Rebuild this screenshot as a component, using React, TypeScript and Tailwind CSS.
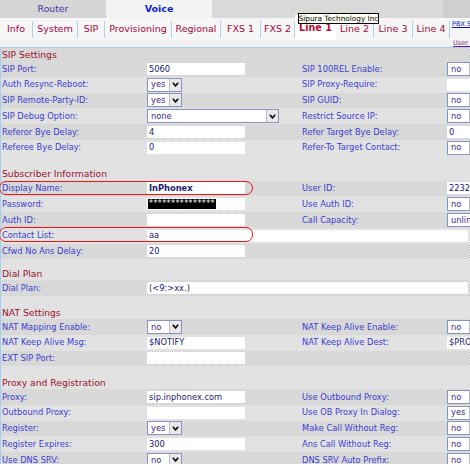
import React from "react";

const DOT =
  "bg-[#d9d9d9] bg-[image:repeating-conic-gradient(#d0d0d0_0%_25%,#e1e1e1_0%_50%)] bg-[length:2px_2px]";
const PLAIN = "bg-[#e2e2e2]";
const LABEL = "text-[8.3px] leading-none whitespace-nowrap text-[#3c3cd2]";

function Chevron() {
  return (
    <svg width="7" height="5" viewBox="0 0 7 5">
      <polyline points="0.8,0.8 3.5,3.9 6.2,0.8" fill="none" stroke="#111" strokeWidth="1.7" />
    </svg>
  );
}

function Sel({ v, wc = "w-[35px]" }: { v: string; wc?: string }) {
  return (
    <div className={`flex h-[14px] shrink-0 border border-[#8a93bd] bg-white ${wc}`}>
      <div className="flex flex-1 items-center pl-[3px] text-[8.3px] leading-none whitespace-nowrap text-[#3a1f8e]">{v}</div>
      <div className="flex w-[12px] items-center justify-center border-l border-[#b8bccc] bg-[#e9e9ec]">
        <Chevron />
      </div>
    </div>
  );
}

function Inp({ v = "", wc = "w-[98px]", bold = false }: { v?: string; wc?: string; bold?: boolean }) {
  return (
    <div
      className={`flex h-[12px] shrink-0 items-center bg-white pl-[2px] text-[8.3px] leading-none whitespace-nowrap text-[#202070] ${wc} ${
        bold ? "font-bold" : ""
      }`}
    >
      {v}
    </div>
  );
}

function Row({
  dotted,
  label,
  left,
  rlabel,
  right,
  wide,
  oval,
}: {
  dotted?: boolean;
  label: string;
  left?: React.ReactNode;
  rlabel?: string;
  right?: React.ReactNode;
  wide?: boolean;
  oval?: string;
}) {
  return (
    <div className={`relative flex h-[15.75px] items-center ${dotted ? DOT : PLAIN}`}>
      <div className={`w-[146px] shrink-0 pl-[1px] ${LABEL}`}>{label}</div>
      {wide ? (
        <div className="flex flex-1">{left}</div>
      ) : (
        <>
          <div className="flex w-[155px] shrink-0">{left}</div>
          <div className={`w-[145px] shrink-0 ${LABEL}`}>{rlabel}</div>
          <div className="flex flex-1 overflow-hidden">{right}</div>
        </>
      )}
      {oval && <div className={`pointer-events-none absolute left-[-2px] w-[254px] rounded-[7px] border-[1.5px] border-[#ee1515] ${oval}`} />}
    </div>
  );
}

function Header({ t, dotted }: { t: string; dotted?: boolean }) {
  return (
    <div className={`flex h-[13px] items-center pl-[1px] text-[9.2px] leading-none text-[#9a0f2c] ${dotted ? DOT : PLAIN}`}>{t}</div>
  );
}

function Tab({ t, wc }: { t: string; wc: string }) {
  return (
    <div className={`flex h-full shrink-0 items-center justify-center text-[9.5px] leading-none whitespace-nowrap text-[#a8063c] ${wc}`}>{t}</div>
  );
}

function Sep() {
  return <div className="h-[17px] w-px shrink-0 bg-[#a9d3f2]" />;
}

export default function App() {
  return (
    <div className="relative h-[464px] w-[470px] overflow-hidden bg-[#e2e2e2] font-['DejaVu_Sans',sans-serif]">
      {/* top tabs */}
      <div className="flex h-[18px]">
        <div className="flex w-[106px] items-center justify-center bg-[#d6d6d6] text-[9.3px] leading-none text-[#4630a6]">Router</div>
        <div className="flex w-[106px] items-center justify-center bg-[#f3f3f3] text-[9.5px] font-bold leading-none text-[#0a1fe6]">Voice</div>
        <div className="w-[231px] bg-[#d9d9d9]" />
        <div className="flex-1 bg-[#cfcfcf]" />
      </div>
      {/* sub tabs */}
      <div className="flex h-[22px] items-center bg-[#f6f6f6]">
        <Tab t="Info" wc="w-[32px]" />
        <Sep />
        <Tab t="System" wc="w-[44px]" />
        <Sep />
        <Tab t="SIP" wc="w-[26px]" />
        <Sep />
        <Tab t="Provisioning" wc="w-[66px]" />
        <Sep />
        <Tab t="Regional" wc="w-[48px]" />
        <Sep />
        <Tab t="FXS 1" wc="w-[39px]" />
        <Sep />
        <Tab t="FXS 2" wc="w-[33px]" />
        <Sep />
        <div className="mt-[-3px] flex h-[25px] w-[41px] shrink-0 items-center justify-center bg-white text-[9.6px] font-semibold leading-none text-[#c20a36]">
          Line 1
        </div>
        <Tab t="Line 2" wc="w-[37px]" />
        <Sep />
        <Tab t="Line 3" wc="w-[38px]" />
        <Sep />
        <Tab t="Line 4" wc="w-[36px]" />
        <Sep />
        <div className="flex h-full flex-1 items-start overflow-hidden pl-[2px] pt-[3px]">
          <span className="text-[6.5px] leading-none whitespace-nowrap text-[#1010e0] underline">PBX Status</span>
        </div>
      </div>
      <div className="flex h-[7px] justify-end bg-[#f2f2f2]">
        <div className="flex w-[17px] items-start overflow-hidden">
          <span className="text-[6.5px] leading-[6px] whitespace-nowrap text-[#7a1a8a] underline">User Login</span>
        </div>
      </div>

      {/* content */}
      <div className="border-t border-l border-[#a4cdef]">
        <Header t="SIP Settings" dotted />
        <Row dotted label="SIP Port:" left={<Inp v="5060" />} rlabel="SIP 100REL Enable:" right={<Sel v="no" />} />
        <Row label="Auth Resync-Reboot:" left={<Sel v="yes" />} rlabel="SIP Proxy-Require:" right={<Inp wc="w-[60px]" />} />
        <Row dotted label="SIP Remote-Party-ID:" left={<Sel v="yes" />} rlabel="SIP GUID:" right={<Sel v="no" />} />
        <Row label="SIP Debug Option:" left={<Sel v="none" wc="w-[132px]" />} rlabel="Restrict Source IP:" right={<Sel v="no" />} />
        <Row dotted label="Referor Bye Delay:" left={<Inp v="4" />} rlabel="Refer Target Bye Delay:" right={<Inp v="0" wc="w-[60px]" />} />
        <Row label="Referee Bye Delay:" left={<Inp v="0" />} rlabel="Refer-To Target Contact:" right={<Sel v="no" />} />

        <div className="h-[12px]" />
        <Header t="Subscriber Information" />
        <Row
          dotted
          label="Display Name:"
          left={<Inp v="InPhonex" bold />}
          rlabel="User ID:"
          right={<Inp v="2232" wc="w-[60px]" />}
          oval="top-[0px] h-[14px]"
        />
        <Row
          label="Password:"
          left={
            <div className="flex h-[12px] w-[98px] items-center bg-white pl-[1px]">
              <span className="flex h-[10px] items-center bg-black px-[1px] text-[8px] leading-none tracking-[0.4px] text-white">
                ***************
              </span>
            </div>
          }
          rlabel="Use Auth ID:"
          right={<Sel v="no" />}
        />
        <Row dotted label="Auth ID:" left={<Inp />} rlabel="Call Capacity:" right={<Sel v="unlimited" wc="w-[70px]" />} />
        <Row label="Contact List:" wide left={<Inp v="aa" wc="w-[321px]" />} oval="top-[-1px] h-[15px]" />
        <Row dotted label="Cfwd No Ans Delay:" left={<Inp v="20" />} />

        <div className="h-[7.75px]" />
        <Header t="Dial Plan" />
        <Row dotted label="Dial Plan:" wide left={<Inp v="(<9:>xx.)" wc="w-[321px]" />} />

        <div className="h-[10.25px]" />
        <Header t="NAT Settings" />
        <Row dotted label="NAT Mapping Enable:" left={<Sel v="no" />} rlabel="NAT Keep Alive Enable:" right={<Sel v="no" />} />
        <Row label="NAT Keep Alive Msg:" left={<Inp v="$NOTIFY" />} rlabel="NAT Keep Alive Dest:" right={<Inp v="$PROXY" wc="w-[60px]" />} />
        <Row dotted label="EXT SIP Port:" left={<Inp />} />

        <div className="h-[9.75px]" />
        <Header t="Proxy and Registration" />
        <Row dotted label="Proxy:" left={<Inp v="sip.inphonex.com" />} rlabel="Use Outbound Proxy:" right={<Sel v="no" />} />
        <Row label="Outbound Proxy:" left={<Inp />} rlabel="Use OB Proxy In Dialog:" right={<Sel v="yes" />} />
        <Row dotted label="Register:" left={<Sel v="yes" />} rlabel="Make Call Without Reg:" right={<Sel v="no" />} />
        <Row label="Register Expires:" left={<Inp v="300" />} rlabel="Ans Call Without Reg:" right={<Sel v="no" />} />
        <Row dotted label="Use DNS SRV:" left={<Sel v="no" />} rlabel="DNS SRV Auto Prefix:" right={<Sel v="no" />} />
      </div>

      {/* tooltip */}
      <div className="absolute left-[298px] top-[13px] flex h-[11px] w-[81px] items-center justify-center border border-black bg-[#fffff4] text-[7.3px] leading-none whitespace-nowrap text-black">
        Sipura Technology Inc
      </div>
    </div>
  );
}
